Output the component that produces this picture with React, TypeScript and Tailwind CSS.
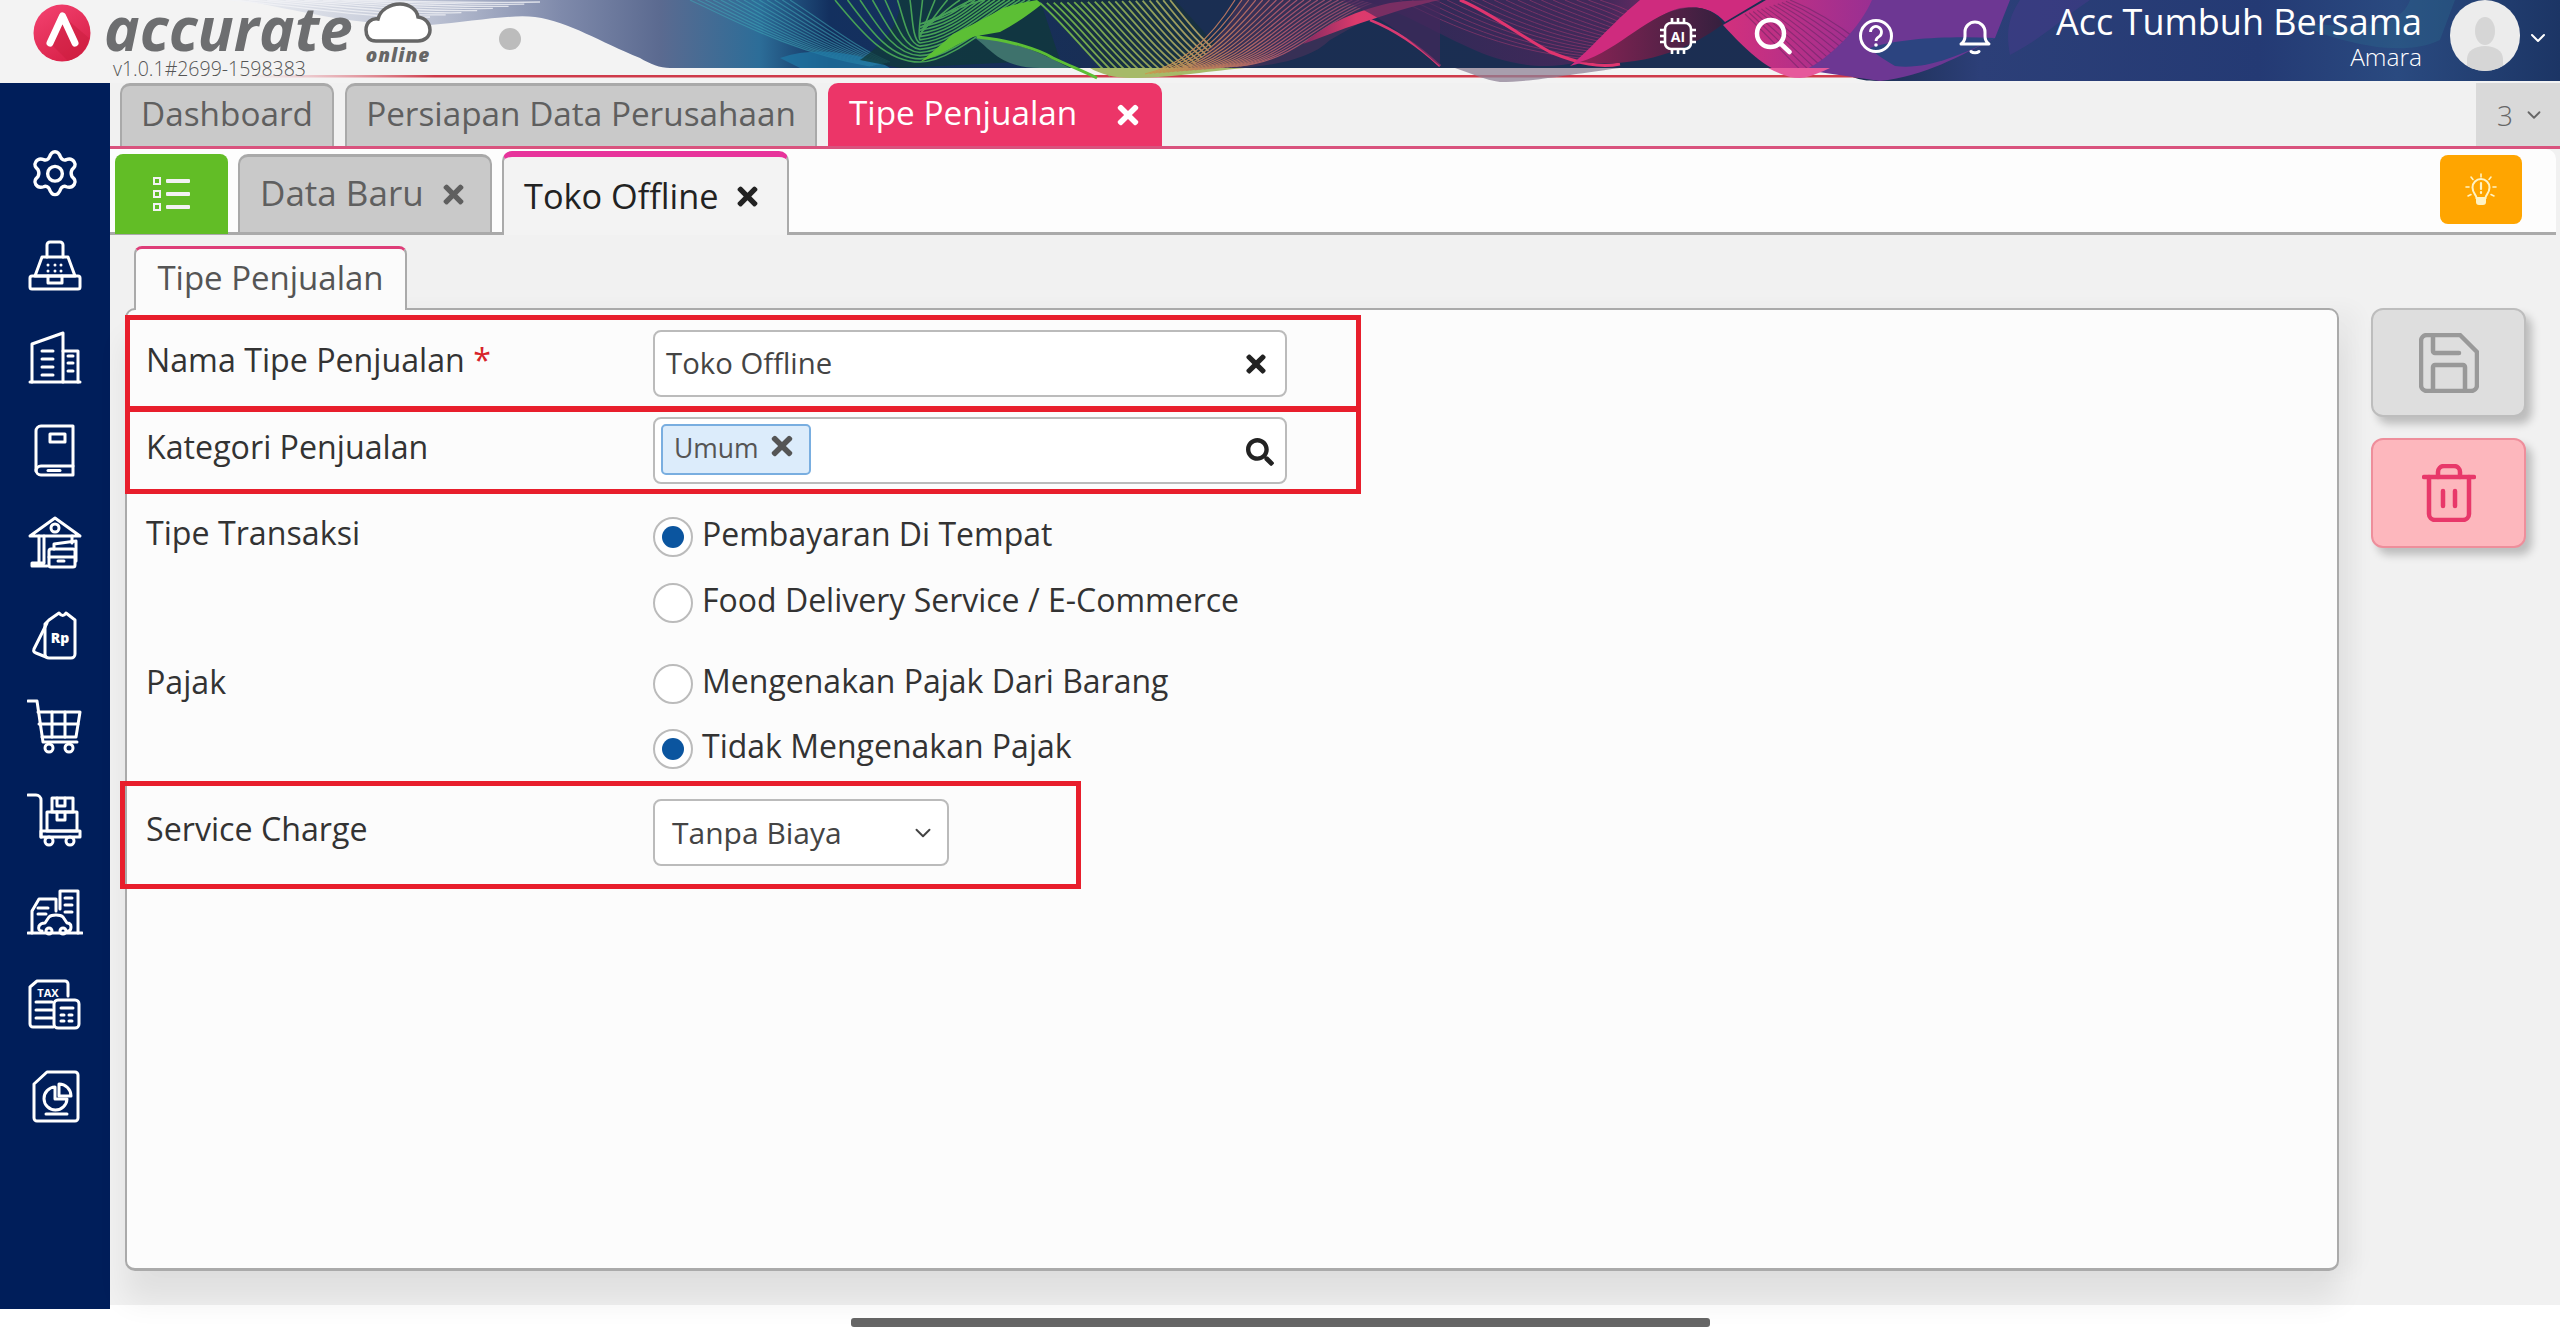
import { ChevronDown } from "lucide-react";
import { FaSearch, FaTimes } from "react-icons/fa";

// interpolated line bundles for the header wave art
const lerpCurve = (from: number[], to: number[], t: number) => {
  const p = from.map((v, i) => v + (to[i] - v) * t);
  let d = `M${p[0]} ${p[1]}`;
  for (let i = 2; i + 5 < p.length; i += 6) {
    d += ` C${p[i]} ${p[i + 1]} ${p[i + 2]} ${p[i + 3]} ${p[i + 4]} ${p[i + 5]}`;
  }
  return d;
};

const Bundle = ({ from, to, n, stroke, width = 1.4, opacity = 1 }: { from: number[]; to: number[]; n: number; stroke: string; width?: number; opacity?: number }) => (
  <g fill="none" stroke={stroke} strokeWidth={width} opacity={opacity}>
    {Array.from({ length: n }).map((_, i) => (
      <path key={i} d={lerpCurve(from, to, i / (n - 1))} />
    ))}
  </g>
);

const Banner = () => (
  <svg className="absolute inset-0" width="2560" height="83" viewBox="0 0 2560 83">
    <defs>
      <linearGradient id="base" gradientUnits="userSpaceOnUse" x1="240" y1="0" x2="2560" y2="0">
        <stop offset="0" stopColor="#eceef2" />
        <stop offset="0.082" stopColor="#bcc2d3" />
        <stop offset="0.138" stopColor="#7f8aab" />
        <stop offset="0.181" stopColor="#5b6a90" />
        <stop offset="0.224" stopColor="#2c6d98" />
        <stop offset="0.254" stopColor="#13305f" />
        <stop offset="0.41" stopColor="#1a2e52" />
        <stop offset="0.7" stopColor="#1c2e52" />
        <stop offset="0.75" stopColor="#2c3f78" />
        <stop offset="0.87" stopColor="#243a74" />
        <stop offset="0.93" stopColor="#2a4a80" />
        <stop offset="1" stopColor="#1c3565" />
      </linearGradient>
      <linearGradient id="fanGreen" gradientUnits="userSpaceOnUse" x1="1040" y1="0" x2="1230" y2="0">
        <stop offset="0" stopColor="#5fae45" />
        <stop offset="1" stopColor="#b3946a" />
      </linearGradient>
      <linearGradient id="fanRose" gradientUnits="userSpaceOnUse" x1="1150" y1="0" x2="1420" y2="0">
        <stop offset="0" stopColor="#c79a4e" />
        <stop offset="0.5" stopColor="#a5546c" />
        <stop offset="1" stopColor="#6a3a6e" />
      </linearGradient>
      <linearGradient id="plum" gradientUnits="userSpaceOnUse" x1="1340" y1="0" x2="1720" y2="0">
        <stop offset="0" stopColor="#2a2a56" />
        <stop offset="0.7" stopColor="#43295a" />
        <stop offset="1" stopColor="#a52a72" />
      </linearGradient>
      <linearGradient id="magenta" gradientUnits="userSpaceOnUse" x1="1730" y1="0" x2="1900" y2="0">
        <stop offset="0" stopColor="#d0307e" />
        <stop offset="1" stopColor="#8f2f96" />
      </linearGradient>
      <linearGradient id="hump" gradientUnits="userSpaceOnUse" x1="1580" y1="0" x2="1720" y2="0">
        <stop offset="0" stopColor="#8a2355" />
        <stop offset="1" stopColor="#37203f" />
      </linearGradient>
      <linearGradient id="pinkBand" gradientUnits="userSpaceOnUse" x1="1300" y1="0" x2="1440" y2="0">
        <stop offset="0" stopColor="#7c2a60" />
        <stop offset="0.4" stopColor="#dc3a6c" />
        <stop offset="1" stopColor="#d93a72" />
      </linearGradient>
      <linearGradient id="redLine" gradientUnits="userSpaceOnUse" x1="240" y1="0" x2="1860" y2="0">
        <stop offset="0" stopColor="#e8a0a8" stopOpacity="0" />
        <stop offset="0.12" stopColor="#cf3a4a" />
        <stop offset="1" stopColor="#cf3a4a" />
      </linearGradient>
    </defs>

    <path d="M240 0 C300 10 350 26 430 25 C470 22 510 14 535 17 C570 22 600 42 640 58 C650 64 660 68 670 68 L1840 68 C1850 78 1860 81 1880 81 L2560 81 L2560 0 Z" fill="url(#base)" />
    <rect x="240" y="75" width="1620" height="2.5" fill="url(#redLine)" />

    {/* gray and teal lines on the left */}
    <Bundle from={[230, 0, 300, 6, 360, 18, 430, 17]} to={[360, 0, 420, 2, 470, 3, 540, 2]} n={8} stroke="#f2f3f7" width={1.3} opacity={0.8} />
    <Bundle from={[690, 0, 730, 18, 790, 52, 870, 66]} to={[790, 0, 830, 26, 860, 50, 890, 62]} n={14} stroke="#3fa7b6" width={1.2} opacity={0.55} />
    <path d="M780 58 C810 48 840 50 880 62 L890 68 L800 68 Z" fill="#1f7ba8" opacity="0.7" />

    {/* green fan */}
    <path d="M860 60 C890 40 900 20 900 0 L1040 0 L1060 60 L900 68 Z" fill="#103a3a" opacity="0.75" />
    <Bundle from={[835, 0, 860, 30, 885, 62, 920, 62, 950, 62, 990, 25, 1030, 0]} to={[985, 0, 965, 3, 940, 18, 920, 24, 950, 18, 960, 8, 970, 0]} n={13} stroke="#46a057" width={1.6} />
    <path d="M920 62 C950 52 965 38 977 36 L1000 32 C1015 24 1030 14 1042 4 L1037 0 C1025 2 1015 4 1003 8 C985 18 970 26 953 34 C942 44 930 54 920 62 Z" fill="#5cbf35" />
    <path d="M975 38 C990 48 1000 68 1040 68 L1070 68 C1050 58 1020 40 975 38 Z" fill="#3e726c" />
    <path d="M1040 0 L1175 0 L1235 66 L1110 74 Z" fill="#17303e" opacity="0.85" />
    <Bundle from={[1040, 3, 1065, 25, 1085, 52, 1110, 76]} to={[1170, 0, 1190, 25, 1210, 50, 1235, 66]} n={20} stroke="url(#fanGreen)" width={1.8} />
    <path d="M977 37 C1010 40 1040 50 1053 58 C1070 66 1085 72 1097 78" fill="none" stroke="#5cbf35" strokeWidth="3" />
    <path d="M1090 68 L1245 68 C1200 72 1170 78 1130 78 C1115 78 1100 74 1090 68 Z" fill="#a6ba68" />

    {/* rose fan */}
    <path d="M1190 68 C1215 50 1230 20 1240 0 L1400 0 L1330 40 C1310 60 1270 66 1240 68 Z" fill="#3b3157" opacity="0.9" />
    <Bundle from={[1145, 74, 1180, 66, 1210, 40, 1235, 0]} to={[1240, 66, 1300, 60, 1320, 20, 1380, 0]} n={22} stroke="url(#fanRose)" width={1.2} />

    {/* pink and plum waves */}
    <path d="M1360 0 L1740 0 C1700 6 1670 10 1640 25 C1610 42 1590 55 1578 62 C1540 72 1500 62 1470 48 C1430 30 1400 10 1360 0 Z" fill="url(#plum)" />
    <Bundle from={[1400, 0, 1440, 20, 1500, 50, 1580, 58]} to={[1600, 0, 1610, 4, 1630, 8, 1640, 20]} n={18} stroke="#c9407a" width={1} opacity={0.4} />
    <path d="M1303 44 C1320 28 1350 12 1390 3 C1410 0 1425 0 1440 0 L1480 0 L1440 0 C1420 4 1400 10 1370 20 C1350 26 1325 36 1303 44 Z" fill="url(#pinkBand)" />
    <path d="M1370 20 C1400 32 1425 52 1440 66" fill="none" stroke="#d93a72" strokeWidth="2.5" />
    <path d="M1460 0 C1490 12 1520 36 1550 52 C1580 64 1600 68 1620 64" fill="none" stroke="#e0356f" strokeWidth="3" />
    <path d="M1340 0 L1440 0 L1440 66 C1410 40 1380 14 1340 0 Z" fill="#45285c" opacity="0.65" />
    <path d="M1570 66 C1620 55 1650 15 1680 8 C1700 5 1715 10 1725 22 L1762 0 L1640 0 C1610 25 1590 50 1570 66 Z" fill="#cf2b7e" />
    <path d="M1580 62 C1620 50 1650 12 1685 8 C1705 6 1715 12 1723 24 C1700 42 1650 70 1580 62 Z" fill="url(#hump)" />
    <path d="M1723 25 L1766 0 L1900 0 C1880 22 1850 50 1802 77 C1780 76 1760 66 1723 25 Z" fill="url(#magenta)" />
    <Bundle from={[1745, 14, 1770, 38, 1790, 60, 1805, 74]} to={[1790, 0, 1820, 12, 1845, 30, 1860, 42]} n={12} stroke="#3a2050" width={1.1} opacity={0.35} />
    <path d="M1920 0 L1872 0 C1860 28 1830 58 1805 70 L1880 81 C1925 76 1960 56 1995 38 L2010 0 Z" fill="#6d3793" />
    <path d="M1870 48 C1900 38 1950 36 1995 38 C1960 56 1925 70 1895 66 C1885 60 1875 54 1870 48 Z" fill="#2c4480" />
    <path d="M2020 0 L2090 0 C2060 20 2040 40 2010 55 C2005 30 2010 15 2020 0 Z" fill="#4a3a8c" opacity="0.45" />
    <path d="M2290 20 C2330 40 2400 60 2440 40 L2455 0 L2410 0 C2400 30 2350 30 2290 20 Z" fill="#2b6a8c" opacity="0.35" />
    <path d="M1455 68 L1620 68 C1560 76 1530 82 1500 82 C1485 80 1470 73 1455 68 Z" fill="#8f8296" opacity="0.75" />
    <path d="M1768 68 L1830 68 C1815 75 1805 78 1800 78 C1790 78 1780 74 1768 68 Z" fill="#e6599c" />
  </svg>
);

const Logo = () => (
  <svg width="58" height="60" viewBox="0 0 58 60" className="mt-[3px] ml-[33px] shrink-0">
    <defs>
      <linearGradient id="logoRed" x1="0.2" y1="0" x2="0.8" y2="1">
        <stop offset="0" stopColor="#f2406e" />
        <stop offset="1" stopColor="#d61f45" />
      </linearGradient>
    </defs>
    <circle cx="29" cy="30" r="28.5" fill="url(#logoRed)" />
    <path d="M17 40 L29 12 L56 35 A28.5 28.5 0 0 1 35 58 Z" fill="#c81d3c" opacity="0.45" />
    <path d="M17 40 L29.5 13 L42 40" fill="none" stroke="#fff" strokeWidth="7" strokeLinecap="round" strokeLinejoin="round" />
  </svg>
);

const Cloud = () => (
  <svg width="68" height="42" viewBox="0 0 68 42">
    <path d="M12 39 C4 39 2 33 2 28 C2 20 8 16 14 17 C16 8 26 2 36 2 C46 2 53 8 54 15 C62 16 66 22 66 28 C66 35 60 39 54 39 Z" fill="#fff" stroke="#666" strokeWidth="3.5" />
  </svg>
);

const AiIcon = () => (
  <svg width="40" height="40" viewBox="0 0 40 40" fill="none" stroke="#fff" strokeWidth="2.6">
    <rect x="7" y="7" width="26" height="26" rx="6" />
    <path d="M14 2v5M20 2v5M26 2v5M14 33v5M20 33v5M26 33v5M2 14h5M2 20h5M2 26h5M33 14h5M33 20h5M33 26h5" />
    <text x="20" y="25.5" textAnchor="middle" fontSize="14" fontWeight="700" fill="#fff" stroke="none" fontFamily="Open Sans, sans-serif">AI</text>
  </svg>
);

const SearchIcon = () => (
  <svg width="40" height="40" viewBox="0 0 40 40" fill="none" stroke="#fff" strokeWidth="4.5" strokeLinecap="round">
    <circle cx="17.5" cy="17.5" r="13.5" />
    <path d="M28 28l8.5 8" />
  </svg>
);

const HelpIcon = () => (
  <svg width="40" height="40" viewBox="0 0 40 40" fill="none" stroke="#fff" strokeWidth="3">
    <circle cx="20" cy="20" r="15.5" />
    <path d="M14.5 16a5.5 5.5 0 1 1 8.5 4.6c-2 1.2-3 2.2-3 4.4" strokeWidth="2.8" />
    <circle cx="20" cy="29" r="1.8" fill="#fff" stroke="none" />
  </svg>
);

const BellIcon = () => (
  <svg width="40" height="40" viewBox="0 0 40 40" fill="none" stroke="#fff" strokeWidth="3" strokeLinejoin="round" strokeLinecap="round">
    <path d="M6 28c3-2 4-4 4-8v-4a10 10 0 0 1 20 0v4c0 4 1 6 4 8Z" />
    <path d="M16 35.5c2 1.6 6 1.6 8 0" />
  </svg>
);

// sidebar icons all sit in a 56 box
const sideIcons = [
  <g key="gear" transform="translate(28 31) scale(1.13) translate(-28 -28)">
    <path d="M28 4c3 0 4 2 5 5 1 2 3 3 5 2 3-1 5-1 7 2s0 5-2 7c-1 2-1 4 0 6 2 2 4 4 2 7s-4 3-7 2c-2-1-4 0-5 2-1 3-2 5-5 5s-4-2-5-5c-1-2-3-3-5-2-3 1-5 1-7-2s0-5 2-7c1-2 1-4 0-6-2-2-4-4-2-7s4-3 7-2c2 1 4 0 5-2 1-3 2-5 5-5Z" transform="translate(0 2.5)" />
    <circle cx="28" cy="26" r="6.5" />
  </g>,
  <g key="fax">
    <path d="M20 20V8a3 3 0 0 1 3-3h10a3 3 0 0 1 3 3v12" />
    <path d="M15 20h26l7 19H8Z" />
    <rect x="3" y="39" width="50" height="13" rx="2" />
    <path d="M21 39v7h14v-7" />
    <g fill="#fff" stroke="none">
      <circle cx="21" cy="28" r="1.5" /><circle cx="28" cy="28" r="1.5" /><circle cx="34" cy="28" r="1.5" />
      <circle cx="21" cy="34" r="1.5" /><circle cx="28" cy="34" r="1.5" /><circle cx="34" cy="34" r="1.5" />
    </g>
  </g>,
  <g key="building">
    <path d="M5 52V14l31-11v49" />
    <path d="M36 21h15v31" />
    <path d="M3 52h50" />
    <path d="M15 21h11M15 29h11M15 37h11M15 45h11M41 26h5M41 33h5M41 41h5" />
  </g>,
  <g key="book">
    <path d="M46 4H14a5 5 0 0 0-5 5v39a5 5 0 0 0 5 5h32Z" />
    <path d="M46 44H14a5 5 0 0 0-5 5" />
    <rect x="23" y="12" width="15" height="8" />
    <path d="M21 48.5h12" />
  </g>,
  <g key="bank">
    <path d="M3 21 28 3l25 18Z" />
    <circle cx="28" cy="13" r="4" />
    <path d="M12 21v26M17 21v26M45 21v7" />
    <path d="M5 51h15M5 51v-3h12" />
    <rect x="22" y="34" width="26" height="18" rx="2" />
    <path d="M27 34v-5l22-3v20M22 42h26M31 46h6" />
  </g>,
  <g key="tag">
    <path d="M22 13 32 6q4 5 7 0l9 7v34a4 4 0 0 1-4 4H22a4 4 0 0 1-4-4V17Z" />
    <path d="M20 16 7 42q-1 3 2 4l10 4" />
    <text x="33" y="36" textAnchor="middle" fontSize="14" fontWeight="800" fill="#fff" stroke="none" fontFamily="Open Sans, sans-serif">Rp</text>
  </g>,
  <g key="cart">
    <path d="M1 2h9l6 41h34" />
    <path d="M11 13h42l-4 25H15" />
    <path d="M25 13v25M38 13v25M12 25h39" />
    <circle cx="22" cy="49" r="4" />
    <circle cx="42" cy="49" r="4" />
  </g>,
  <g key="trolley">
    <path d="M1 3h8a5 5 0 0 1 5 5v37" />
    <path d="M14 39h39v6H14Z" />
    <circle cx="22" cy="49" r="4" />
    <circle cx="43" cy="49" r="4" />
    <rect x="20" y="20" width="30" height="19" />
    <rect x="25" y="6" width="21" height="14" />
    <path d="M30 20v8h8v-8M30 6v8h8V6" />
  </g>,
  <g key="city">
    <path d="M1 49h54" />
    <path d="M5 49V27l7-12h17v12" />
    <path d="M33 25V7h18v42" />
    <path d="M11 24h10M11 30h8M38 14h7M38 21h7M38 28h7" />
    <path d="M15 47c-3 0-4-2-3-5 1-2 3-3 6-3l4-6c1-1 2-2 7-2s6 1 7 2l4 6c3 0 4 2 4 4 0 3-1 4-3 4" />
    <circle cx="22" cy="47" r="3" />
    <circle cx="36" cy="47" r="3" />
  </g>,
  <g key="tax">
    <path d="M41 19V7a3 3 0 0 0-3-3H10L3 10v37a3 3 0 0 0 3 3h20" />
    <text x="21" y="19.5" textAnchor="middle" fontSize="11" fontWeight="700" fill="#fff" stroke="none" fontFamily="Open Sans, sans-serif">TAX</text>
    <path d="M9 25h16M9 33h16M9 41h16" />
    <rect x="27" y="23" width="25" height="28" rx="4" />
    <path d="M34 31h12M34 38h3M42 38h3M34 44h3M42 44h3" />
  </g>,
  <g key="report">
    <path d="M20 3h28a3 3 0 0 1 3 3v43a3 3 0 0 1-3 3H10a3 3 0 0 1-3-3V15Z" />
    <path d="M28 18a11.5 11.5 0 1 0 12 12H28Z" />
    <path d="M32 15a12 12 0 0 1 12 12H32Z" />
    <path d="M19 45h21" />
  </g>,
];

const SideIcon = ({ children }: { children: React.ReactNode }) => (
  <svg width="56" height="56" viewBox="0 0 56 56" fill="none" stroke="#fff" strokeWidth="3" strokeLinecap="round" strokeLinejoin="round">
    {children}
  </svg>
);

const Radio = ({ checked, label }: { checked?: boolean; label: string }) => (
  <div className="flex h-[40px] items-center">
    <span className="flex h-[40px] w-[40px] shrink-0 items-center justify-center rounded-full border-[2px] border-[#bbb] bg-white">
      {checked && <span className="h-[22px] w-[22px] rounded-full bg-[#0b559f]" />}
    </span>
    <span className="ml-[9px] -mt-[7px] text-[32px] leading-[40px] text-[#333]">{label}</span>
  </div>
);

const Label = ({ children, className = "" }: { children: React.ReactNode; className?: string }) => (
  <div className={`w-[507px] shrink-0 text-[32.2px] leading-[44px] text-[#333] ${className}`}>{children}</div>
);

export default function App() {
  return (
    <div className="relative flex h-[1341px] w-[2560px] flex-col overflow-hidden bg-white font-['Open_Sans',sans-serif]">
      {/* header */}
      <header className="relative flex h-[83px] shrink-0 bg-[#f3f3f3]">
        <Banner />
        <div className="relative flex w-[1658px] shrink-0">
          <Logo />
          <div className="ml-[13px] w-[270px] shrink-0">
            <div className="text-[60px] leading-[56px] font-bold italic text-[#6d6e70]">accurate</div>
            <div className="mt-[1px] ml-[9px] text-[19.5px] leading-[24px] font-light text-[#555]">v1.0.1#2699-1598383</div>
          </div>
          <div className="mt-[2px] -ml-[10px] flex w-[68px] flex-col items-center">
            <Cloud />
            <span className="mt-[1px] text-[19px] leading-[20px] font-extrabold italic tracking-[1px] text-[#666]">online</span>
          </div>
          <span className="mt-[28px] ml-[67px] h-[22px] w-[22px] rounded-full bg-[#bcbcbc]" />
        </div>
        <div className="relative flex items-center pb-[12px]">
          <div className="mr-[55px]"><AiIcon /></div>
          <div className="mr-[63px]"><SearchIcon /></div>
          <div className="mr-[59px]"><HelpIcon /></div>
          <BellIcon />
        </div>
        <div className="relative flex flex-1 justify-end pr-[10px]">
          <div className="text-right text-white">
            <div className="pt-[2px] text-[36px] leading-[40px] font-normal">Acc Tumbuh Bersama</div>
            <div className="text-[24.5px] leading-[30px] font-light">Amara</div>
          </div>
          <div className="ml-[28px] flex h-[71px] w-[70px] items-end justify-center overflow-hidden rounded-full bg-[#ececec]">
            <svg width="40" height="56" viewBox="0 0 40 56" fill="#d6d6d6">
              <ellipse cx="20" cy="16" rx="10" ry="14" />
              <path d="M2 56V44c0-8 8-13 18-13s18 5 18 13v12Z" />
            </svg>
          </div>
          <ChevronDown className="mt-[26px] ml-[6px] text-white" size={24} strokeWidth={2} />
        </div>
      </header>

      <div className="flex h-[1226px] shrink-0">
        {/* sidebar */}
        <aside className="flex w-[110px] shrink-0 flex-col items-center gap-[36.4px] bg-[#001e5a] pt-[62px]">
          {sideIcons.map((icon, i) => (
            <SideIcon key={i}>{icon}</SideIcon>
          ))}
        </aside>

        <main className="flex h-[1222px] flex-1 flex-col bg-[#f1f1f1]">
          {/* main tabs */}
          <div className="flex h-[66px] shrink-0 border-b-[3px] border-[#d9537e]">
            <div className="flex gap-[11px] pl-[10px]">
              <div className="flex h-[63px] w-[214px] items-center justify-center rounded-t-[10px] border-x-[2px] border-t-[3px] border-[#a9a9a9] bg-[#c9c9c9] pb-[5px] text-[33.3px] text-[#5f5f5f]">Dashboard</div>
              <div className="flex h-[63px] w-[472px] items-center justify-center rounded-t-[10px] border-x-[2px] border-t-[3px] border-[#a9a9a9] bg-[#c9c9c9] pb-[5px] text-[33.3px] text-[#5f5f5f]">Persiapan Data Perusahaan</div>
              <div className="flex h-[63px] w-[334px] items-center rounded-t-[10px] bg-[#ec3568] pl-[21px] text-[33.3px] text-white">
                <span className="pb-[3px]">Tipe Penjualan</span>
                <FaTimes className="ml-[36px]" size={30} />
              </div>
            </div>
            <div className="ml-auto flex w-[84px] items-center justify-center gap-[10px] bg-[#d9d9d9] pl-[6px] text-[28px] font-light text-[#666]">
              <span>3</span>
              <ChevronDown size={22} strokeWidth={2} />
            </div>
          </div>

          {/* document tabs */}
          <div className="mr-[4px] flex h-[86px] shrink-0 items-end gap-[10px] rounded-tr-[10px] border-b-[3px] border-[#aaa] bg-[#fdfdfd] pl-[5px]">
            <div className="-mb-[2px] flex h-[80px] w-[113px] items-center justify-center rounded-t-[8px] bg-[#62bd26]">
              <svg width="40" height="36" viewBox="0 0 40 36" fill="#f2f2f2">
                <path d="M1 1h8v8H1ZM3 3v4h4V3ZM1 14h8v8H1ZM3 16v4h4v-4ZM1 27h8v8H1ZM3 29v4h4v-4Z" fillRule="evenodd" />
                <rect x="14" y="3" width="24" height="4" rx="1" />
                <rect x="14" y="16" width="24" height="4" rx="1" />
                <rect x="14" y="29" width="24" height="4" rx="1" />
              </svg>
            </div>
            <div className="flex h-[78px] w-[254px] items-center rounded-t-[10px] border-x-[2px] border-t-[3px] border-[#a9a9a9] bg-[#c9c9c9] pl-[20px] text-[35px] text-[#5f5f5f]">
              <span className="pb-[2px]">Data Baru</span>
              <FaTimes className="ml-[15px]" size={29} />
            </div>
            <div className="-mb-[3px] flex h-[84px] w-[287px] items-center rounded-t-[10px] border-x-[2px] border-t-[6px] border-x-[#aaa] border-t-[#e7339b] bg-[#f3f3f3] pl-[20px] text-[34.3px] text-[#222]">
              <span className="pb-[1px]">Toko Offline</span>
              <FaTimes className="ml-[15px]" size={29} />
            </div>
            <button className="mr-[34px] mb-[8px] ml-auto flex h-[69px] w-[82px] items-center justify-center rounded-[8px] bg-[#ffa500]">
              <svg width="34" height="34" viewBox="0 0 34 34" fill="none" stroke="#fff3c4" strokeWidth="1.6" strokeLinecap="round">
                <path d="M17 1v3M7 4l2 2.5M27 4l-2 2.5M2 14h3M32 14h-3M4 23l3-1.5M30 23l-3-1.5" />
                <path d="M12.5 25c0-3-4-5-4-10.5a8.5 8.5 0 0 1 17 0c0 5.500-4 7.500-4 10.500Z" strokeWidth="2" />
                <path d="M12 25h10v4q0 3-3 3h-4q-3 0-3-3Z" fill="#fff3c4" stroke="none" />
                <path d="M17 10v6M17 19v1" strokeWidth="2.2" />
              </svg>
            </button>
          </div>

          {/* form */}
          <div className="relative flex flex-1 pt-[11px] pl-[15px]">
            <div className="w-[2214px] shrink-0">
              <div className="relative z-10 ml-[9px] -mb-[2px] flex h-[64px] w-[273px] items-center justify-center rounded-t-[8px] border-x-[2px] border-t-[3px] border-x-[#aaa] border-t-[#de3d78] bg-[#fbfbfb] pb-[4px] text-[33px] text-[#555]">
                Tipe Penjualan
              </div>
              <div className="h-[963px] rounded-[10px] border-[2px] border-b-[3px] border-[#aaa] bg-[#fcfcfc] pt-[20px] pl-[19px] shadow-[0_30px_30px_rgba(0,0,0,0.07),20px_0_20px_rgba(0,0,0,0.03)]">
                <div className="flex">
                  <Label className="pt-[8px]">
                    Nama Tipe Penjualan <span className="text-[#d8232a]">*</span>
                  </Label>
                  <div className="flex h-[67px] w-[634px] items-center justify-between rounded-[8px] border-[2.5px] border-[#bbb] bg-white pr-[15px] pl-[11px] text-[29.3px] text-[#444]">
                    <span>Toko Offline</span>
                    <FaTimes className="text-[#222]" size={28} />
                  </div>
                </div>
                <div className="mt-[20px] flex">
                  <Label className="pt-[8px]">Kategori Penjualan</Label>
                  <div className="flex h-[67px] w-[634px] items-center justify-between rounded-[8px] border-[2.5px] border-[#bbb] bg-white pr-[11px] pl-[6px]">
                    <div className="-mt-[3px] flex h-[51px] w-[150px] items-center rounded-[5px] border-[2px] border-[#79aee0] bg-[#dcecfb] pl-[11px] text-[26.5px] text-[#555]">
                      <span>Umum</span>
                      <FaTimes className="ml-[8px] -mt-[6px] text-[#555]" size={30} />
                    </div>
                    <FaSearch className="mt-[2px] text-[#222]" size={28} />
                  </div>
                </div>
                <div className="mt-[33px] flex">
                  <Label className="-mt-[6px]">Tipe Transaksi</Label>
                  <div className="flex flex-col gap-[26px]">
                    <Radio checked label="Pembayaran Di Tempat" />
                    <Radio label="Food Delivery Service / E-Commerce" />
                  </div>
                </div>
                <div className="mt-[41px] flex">
                  <Label className="-mt-[4px]">Pajak</Label>
                  <div className="flex flex-col gap-[25px]">
                    <Radio label="Mengenakan Pajak Dari Barang" />
                    <Radio checked label="Tidak Mengenakan Pajak" />
                  </div>
                </div>
                <div className="mt-[30px] flex">
                  <Label className="pt-[8px]">Service Charge</Label>
                  <div className="flex h-[67px] w-[296px] items-center justify-between rounded-[8px] border-[2.5px] border-[#bbb] bg-white pr-[11px] pl-[17px] text-[30px] text-[#444]">
                    <span>Tanpa Biaya</span>
                    <ChevronDown size={26} strokeWidth={1.8} />
                  </div>
                </div>
              </div>
            </div>
            <div className="mt-[62px] ml-[32px] flex flex-col gap-[21px]">
              <button className="flex h-[109px] w-[155px] items-center justify-center rounded-[12px] border-[2px] border-[#bdbdbd] bg-[#dedede] shadow-[6px_7px_8px_rgba(0,0,0,0.22)]">
                <svg width="60" height="60" viewBox="0 0 60 60" fill="none" stroke="#999" strokeWidth="4.500" strokeLinejoin="round" strokeLinecap="round">
                  <path d="M8 2h33l17 17v33a6 6 0 0 1-6 6H8a6 6 0 0 1-6-6V8a6 6 0 0 1 6-6Z" />
                  <path d="M14 2v16a2 2 0 0 0 2 2h24" />
                  <path d="M14 58V34a2 2 0 0 1 2-2h28a2 2 0 0 1 2 2v24" />
                </svg>
              </button>
              <button className="flex h-[110px] w-[155px] items-center justify-center rounded-[12px] border-[2px] border-[#ee8e9b] bg-[#fdb7bd] shadow-[6px_7px_8px_rgba(0,0,0,0.22)]">
                <svg width="54" height="58" viewBox="0 0 54 58" fill="none" stroke="#e8386a" strokeWidth="4.500" strokeLinejoin="round" strokeLinecap="round">
                  <path d="M2 13h50" />
                  <path d="M16 13V8a6 6 0 0 1 6-6h10a6 6 0 0 1 6 6v5" />
                  <path d="M7 13v37a6 6 0 0 0 6 6h28a6 6 0 0 0 6-6V13" />
                  <path d="M21 27v15M33 27v15" />
                </svg>
              </button>
            </div>
          </div>
        </main>
      </div>

      {/* bottom scroll bar */}
      <div className="flex justify-center pt-[9px]">
        <div className="h-[9px] w-[859px] rounded-[3px] bg-[#666]" />
      </div>

      {/* red annotation boxes */}
      <div className="absolute top-[315px] left-[125px] h-[96px] w-[1236px] border-[5px] border-[#e81e2c]" />
      <div className="absolute top-[407px] left-[125px] h-[87px] w-[1236px] border-[5px] border-[#e81e2c]" />
      <div className="absolute top-[781px] left-[120px] h-[108px] w-[961px] border-[5px] border-[#e81e2c]" />
    </div>
  );
}
